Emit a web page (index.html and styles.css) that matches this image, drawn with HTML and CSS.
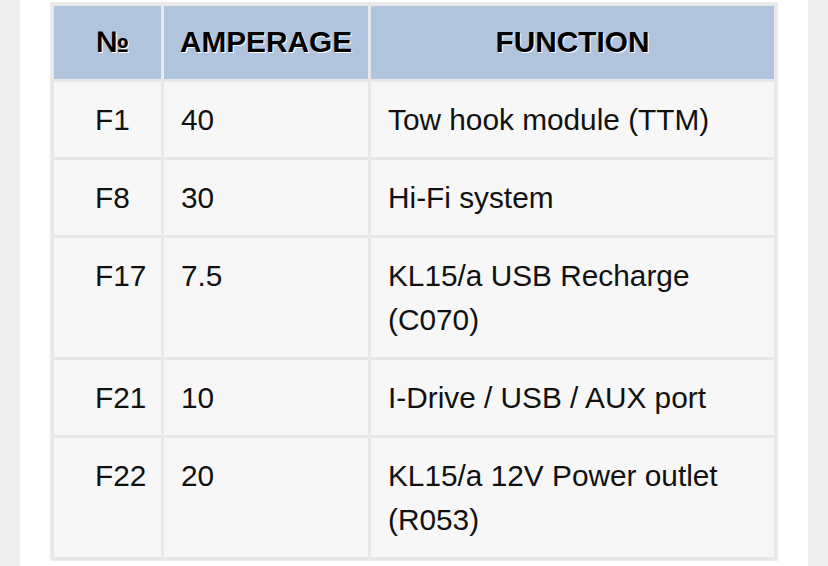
FILE: index.html
```html
<!DOCTYPE html>
<html lang="en">
<head>
<meta charset="utf-8">
<title>Fuse table</title>
<link rel="stylesheet" href="styles.css">
</head>
<body>
<main class="page">
  <table class="fuses">
    <thead>
      <tr>
        <th class="c-num">№</th>
        <th class="c-amp">AMPERAGE</th>
        <th class="c-fn">FUNCTION</th>
      </tr>
    </thead>
    <tbody>
      <tr><td class="c-num">F1</td><td class="c-amp">40</td><td class="c-fn">Tow hook module (TTM)</td></tr>
      <tr><td class="c-num">F8</td><td class="c-amp">30</td><td class="c-fn">Hi-Fi system</td></tr>
      <tr><td class="c-num">F17</td><td class="c-amp">7.5</td><td class="c-fn">KL15/a USB Recharge (C070)</td></tr>
      <tr><td class="c-num">F21</td><td class="c-amp">10</td><td class="c-fn">I-Drive / USB / AUX port</td></tr>
      <tr><td class="c-num">F22</td><td class="c-amp">20</td><td class="c-fn">KL15/a 12V Power outlet (R053)</td></tr>
    </tbody>
  </table>
</main>
</body>
</html>
```

FILE: styles.css
```css
html, body {
  margin: 0;
  padding: 0;
}
body {
  background: #efefef;
  font-family: "Liberation Sans", Arial, sans-serif;
  height: 566px;
  overflow: hidden;
}
.page {
  margin: 0 20px;
  background: #ffffff;
  height: 566px;
  padding: 2px 30px 0;
  box-sizing: border-box;
}
.fuses {
  width: 728px;
  table-layout: fixed;
  border-collapse: separate;
  border-spacing: 3px;
  border: 1px solid #ededed;
  background: #e8e8e8;
  font-size: 29.8px;
  line-height: 44px;
  color: #111;
}
.fuses th,
.fuses td {
  box-sizing: border-box;
  vertical-align: top;
}
.fuses th {
  background: #b0c4de;
  font-weight: bold;
  color: #000;
  text-shadow: 1px 1px 0 #ffffff;
  text-align: center;
  padding: 14px 8px 15px;
}
.fuses th.c-num {
  padding-left: 14px;
  padding-right: 4px;
}
.fuses td {
  background: #f7f7f7;
  padding: 15.5px 17px 15.5px;
  text-align: left;
}
.fuses .c-num { width: 107px; }
.fuses .c-amp { width: 204px; }
.fuses .c-fn { width: 403px; }
.fuses td.c-num { padding-left: 41px; padding-right: 4px; }
```
